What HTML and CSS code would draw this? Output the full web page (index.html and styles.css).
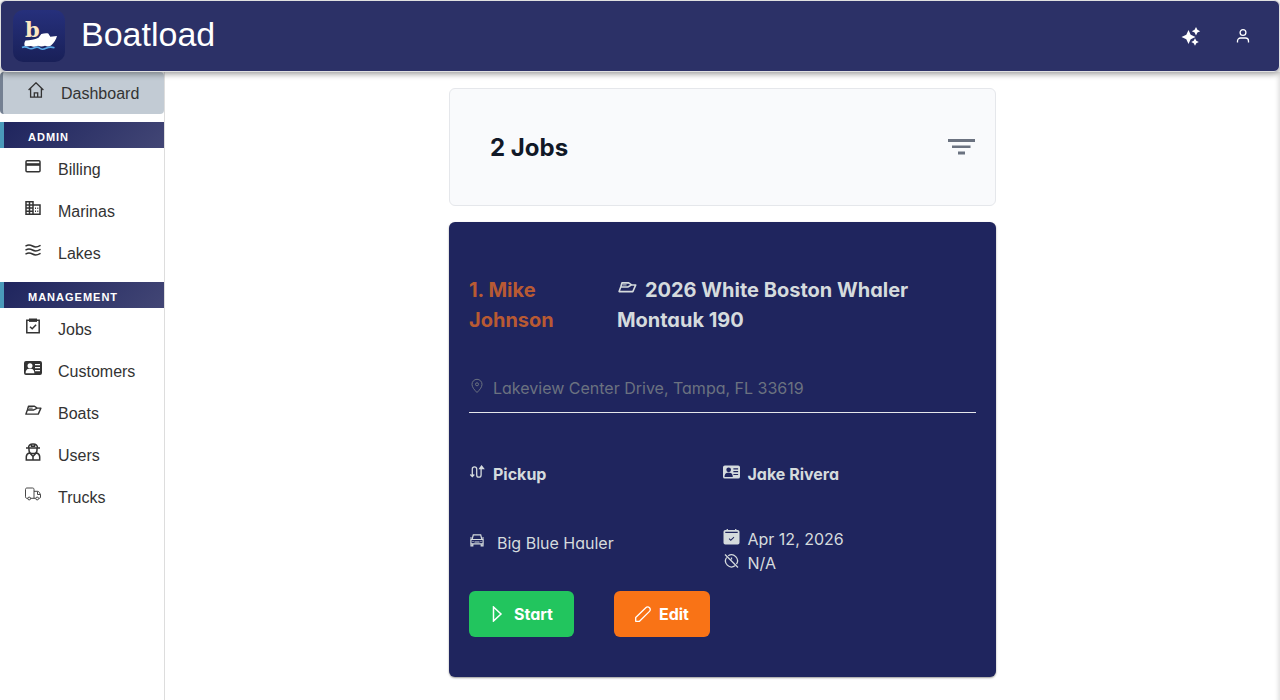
FILE: index.html
```
<!DOCTYPE html>
<html lang="en">
<head>
  <meta charset="utf-8">
  <title>Boatload</title>
  <link rel="stylesheet" href="styles.css">
</head>
<body>

<svg class="defs" aria-hidden="true">
  <symbol id="boat" viewBox="0 0 24 24">
    <path d="M2.500 17.500L4.500 12H13L17.500 9.500H22.500L19 17.500zM4.500 12L6 7h8l3.500 2.500" fill="none" stroke="currentColor" stroke-width="1.900" stroke-linejoin="round"/>
    <path d="M6.500 9.500h5" stroke="currentColor" stroke-width="1.200"/>
  </symbol>
  <symbol id="idcard" viewBox="0 0 18 14">
    <path fill="currentColor" fill-rule="evenodd" d="M2 0h14a2 2 0 0 1 2 2v10a2 2 0 0 1-2 2H2a2 2 0 0 1-2-2V2a2 2 0 0 1 2-2zM6 2.200a2.500 2.500 0 1 0 0 5 2.500 2.500 0 0 0 0-5zM1.600 12.200h8.800c0-2.800-1.400-4.400-3.400-4.400H5c-2 0-3.400 1.600-3.400 4.400zM11 3v1.300h5V3zm0 3v1.300h5V6zm0 3v1.300h5V9z"/>
  </symbol>
</svg>

<header class="topbar">
  <a class="brand" href="#">
    <svg class="logo" viewBox="0 0 52 52" aria-hidden="true">
      <defs>
        <linearGradient id="logoBg" x1="0" y1="0" x2="0" y2="1">
          <stop offset="0" stop-color="#26307c"/>
          <stop offset="1" stop-color="#192058"/>
        </linearGradient>
      </defs>
      <rect width="52" height="52" rx="10" fill="url(#logoBg)"/>
      <text class="logo-letter" x="12" y="27">b</text>
      <path d="M12.500 30.500c4.500-.3 9-1 13-2.800l2.800-3.600c2.500-.8 5-.9 7-.6l2 3.200 6.700-.7c-1 3.600-3.200 7-6 9.600-2 1.200-4 1-6 .2-2.500 1-4.500 1-7 0-2.500 1-5 1.200-7 .2l-6 .5c-1-2-.8-4 .5-6z" fill="#fff"/>
      <path d="M9 37.500c2.500-1.300 4.500-.6 6.500.6s4 .8 6-.3 4-.6 5.500.5 4 1 6 0 4.500-1.800 8.500-.5" fill="none" stroke="#5aa9e6" stroke-width="1.600"/>
    </svg>
    <span class="brand-name">Boatload</span>
  </a>
  <div class="actions">
    <button type="button" aria-label="Assistant">
      <svg width="20" height="20" viewBox="0 0 20 20" fill="currentColor"><path d="M7.500 4l2.200 4.800L14.500 11l-4.800 2.200-2.200 4.800-2.200-4.800L.5 11l4.800-2.200zM15 1l1.400 2.800L19.200 5.200l-2.800 1.400L15 9.400l-1.400-2.800-2.800-1.400 2.800-1.400zM14 12.200l1.300 2.500 2.500 1.300-2.500 1.300L14 19.800l-1.300-2.500-2.500-1.300 2.500-1.300z"/></svg>
    </button>
    <button type="button" aria-label="Account">
      <svg width="16" height="16" viewBox="0 0 16 16" fill="none" stroke="currentColor" stroke-width="1.300"><circle cx="8" cy="4.500" r="2.900"/><path d="M2.500 14.500v-1.500a3 3 0 0 1 3-3h5a3 3 0 0 1 3 3v1.500"/></svg>
    </button>
  </div>
</header>

<div class="layout">
  <nav class="sidebar">
    <a class="item active" href="#">
      <svg viewBox="0 0 16 16" fill="none" stroke="currentColor" stroke-width="1.300"><path d="M.6 8L8 .8 15.400 8M2.600 6.500v8.700h10.800V6.500M6.300 15v-4.200h3.400V15"/></svg>
      Dashboard
    </a>

    <h2>Admin</h2>
    <a class="item" href="#">
      <svg viewBox="0 0 16 16" fill="none" stroke="currentColor" stroke-width="1.500"><rect x="1" y="2.700" width="14" height="11" rx="1"/><path d="M1 6.500h14" stroke-width="2.600"/></svg>
      Billing
    </a>
    <a class="item" href="#">
      <svg viewBox="0 0 16 16" fill="none" stroke="currentColor" stroke-width="1.500"><path d="M1 1.700h7v12.600H1zM4.500 1.700v12.600M1 4.900h7M1 8.100h7M1 11.300h7M8 4.900h7v9.400H8"/><path d="M10 8.200h1M12.300 8.200h1M10 11.300h1M12.300 11.300h1" stroke-width="1.600"/></svg>
      Marinas
    </a>
    <a class="item" href="#">
      <svg viewBox="0 0 16 16" fill="none" stroke="currentColor" stroke-width="1.500" stroke-linecap="round"><path d="M1 3.800c2-1.300 4-1.300 6.500.2s4.500 1.300 7.500-.4M1 7.800c2-1.300 4-1.300 6.500.2s4.500 1.300 7.500-.4M1 11.800c2-1.300 4-1.300 6.500.2s4.500 1.300 7.500-.4"/></svg>
      Lakes
    </a>

    <h2>Management</h2>
    <a class="item" href="#">
      <svg viewBox="0 0 16 16" fill="none" stroke="currentColor" stroke-width="1.500"><path d="M1.800 2.200h12.400v12.500H1.800z"/><path d="M4 2.200h8" stroke-width="3.400"/><path d="M5 8.700l2.200 2.100 3.900-4"/></svg>
      Jobs
    </a>
    <a class="item" href="#">
      <svg class="wide"><use href="#idcard"/></svg>
      Customers
    </a>
    <a class="item" href="#">
      <svg class="hull"><use href="#boat"/></svg>
      Boats
    </a>
    <a class="item" href="#">
      <svg class="tall" viewBox="0 0 16 18" fill="none" stroke="currentColor" stroke-width="1.500"><path d="M1 5h14M3.500 5c0-2.500 2-4 4.500-4s4.500 1.500 4.500 4M6.500 1.300v2h3v-2M4 5v2c0 2.200 1.800 3.600 4 3.600s4-1.400 4-3.600V5M4.800 9.800c-2.500.8-3.500 2-3.500 4V17h13.400v-3.200c0-2-1-3.200-3.500-4M4.800 10L8 13.500 11.200 10M8 13.500V17"/></svg>
      Users
    </a>
    <a class="item" href="#">
      <svg viewBox="0 0 16 16" fill="none" stroke="currentColor" stroke-width=".9"><path d="M2.800 12.300H2C1 12.300.5 11.800.5 10.800V3.500c0-1 .5-1.500 1.500-1.500h5.500C8.500 2 9 2.500 9 3.500v8.800H5.500M9 5.300h3.500c1 0 1.500.4 2 1.400l1 2v2.300c0 .9-.4 1.300-1.500 1.300M9 12.300h1.700M12.500 5.500v3h2.800"/><circle cx="4.200" cy="12.500" r="1.400"/><circle cx="12.200" cy="12.500" r="1.400"/></svg>
      Trucks
    </a>
  </nav>

  <main>
    <section class="summary">
      <h1>2 Jobs</h1>
      <button type="button" class="filter" aria-label="Filter jobs">
        <svg width="28" height="18" viewBox="0 0 28 18" fill="currentColor"><path d="M1 1h27v3H1zM5 7.500h18.500v2.500H5zM11 13.500h7v3h-7z"/></svg>
      </button>
    </section>

    <article class="job">
      <div class="job-title">
        <h3 class="customer">1. Mike Johnson</h3>
        <h3><svg class="boat"><use href="#boat"/></svg>2026 White Boston Whaler Montauk 190</h3>
      </div>

      <p class="address">
        <svg viewBox="0 0 16 16" fill="none" stroke="currentColor"><path d="M8 14.500C5 11.500 3 9 3 6.300a5 5 0 0 1 10 0C13 9 11 11.500 8 14.500z"/><circle cx="8" cy="6.300" r="1.500"/></svg>
        Lakeview Center Drive, Tampa, FL 33619
      </p>

      <div class="details">
        <p class="strong">
          <svg viewBox="0 0 16 16" fill="none" stroke="currentColor" stroke-width="1.300"><path d="M3.300 12.500V5a2.200 2.200 0 0 1 4.400 0v6a2.200 2.200 0 0 0 4.400 0V4M1.300 10.500l2 2 2-2"/><path d="M10.800 4.500l1.800-2.500 1.900 2.500z" fill="currentColor"/></svg>
          Pickup
        </p>
        <p class="strong">
          <svg class="card-icon"><use href="#idcard"/></svg>
          Jake Rivera
        </p>
        <p class="truck">
          <svg viewBox="0 0 16 16" fill="none" stroke="currentColor" stroke-width="1.200"><path d="M1.900 6.500h12.200v4.300H1.900zM3.100 6.500l1.200-4.600h7.400l1.200 4.600M2 10.800v2h1.800v-2M12.200 10.800v2H14v-2M5.500 9h5M3.500 8.500h1M11.500 8.500h1M1 5h2M13 5h2"/></svg>
          Big Blue Hauler
        </p>
        <div class="when">
          <p>
            <svg class="card-icon" viewBox="0 0 18 18"><path fill="currentColor" fill-rule="evenodd" d="M3.500 0H5v1h8V0h1.500v1H16a2 2 0 0 1 2 2v12.500a2 2 0 0 1-2 2H2a2 2 0 0 1-2-2V3a2 2 0 0 1 2-2h1.500zM2 3v1.600h14V3zM11.500 8.700l-3.300 3.200-1.600-1.500-.7.800 2.300 2.200 4-3.900z"/></svg>
            Apr 12, 2026
          </p>
          <p>
            <svg class="card-icon" viewBox="0 0 17 16" fill="none" stroke="currentColor" stroke-width="1.300"><path d="M2 1.500l13 13M5.200 2.800a6 6 0 0 1 8.300 8.300M12 12.800A6 6 0 0 1 3.600 4.500M8.500 4.500v2"/></svg>
            N/A
          </p>
        </div>
      </div>

      <div class="buttons">
        <button type="button" class="start">
          <svg viewBox="0 0 16 16" fill="none" stroke="currentColor" stroke-width="1.500"><path d="M3.500 1l7.500 7-7.500 7z"/></svg>
          Start
        </button>
        <button type="button" class="edit">
          <svg viewBox="0 0 16 16" fill="none" stroke="currentColor" stroke-width="1.300" stroke-linejoin="round"><path d="M.7 15.300V11.500L10.800 1.700a2.600 2.600 0 0 1 3.700 0 2.600 2.600 0 0 1 0 3.700L4.500 15.300z"/></svg>
          Edit
        </button>
      </div>
    </article>
  </main>
</div>

</body>
</html>
```
FILE: styles.css
```
* {
  box-sizing: border-box;
}

body {
  margin: 0;
  min-height: 100vh;
  display: flex;
  flex-direction: column;
  font-family: "Liberation Sans", Arial, sans-serif;
  font-size: 16px;
  background: #fff;
  color: #333;
}

h1, h2, h3, p {
  margin: 0;
}

button {
  font: inherit;
  border: none;
  cursor: pointer;
}

.defs {
  display: none;
}

/* top bar */
.topbar {
  display: flex;
  justify-content: space-between;
  align-items: center;
  height: 72px;
  padding: 0 16px 0 12px;
  background: #2c3167;
  border: 1px solid #e0e0e0;
  border-radius: 6px;
  box-shadow: 0 2px 6px rgba(0, 0, 0, 0.4);
  position: relative;
  z-index: 1;
}

.brand {
  display: flex;
  align-items: center;
  gap: 16px;
  color: #fff;
  text-decoration: none;
}

.logo {
  width: 52px;
  height: 52px;
}

.logo-letter {
  font: bold 21px "DejaVu Serif", serif;
  fill: #fbe7c3;
}

.brand-name {
  font-size: 34px;
  line-height: 40px;
  padding-bottom: 4px;
}

.actions {
  display: flex;
  gap: 12px;
}

.actions button {
  display: flex;
  align-items: center;
  justify-content: center;
  width: 40px;
  height: 40px;
  padding: 0;
  background: none;
  color: #fff;
}

.layout {
  flex: 1;
  display: flex;
}

/* sidebar */
.sidebar {
  width: 165px;
  flex-shrink: 0;
  border-right: 1px solid #ddd;
}

.sidebar h2 {
  margin-top: 8px;
  padding: 4px 0 0 24px;
  border-left: 4px solid #4a9aba;
  background: linear-gradient(135deg, #1f255e, #424675);
  color: #fff;
  font-size: 11px;
  line-height: 22px;
  letter-spacing: 1px;
  text-transform: uppercase;
}

.item {
  display: flex;
  align-items: center;
  height: 42px;
  padding: 2px 0 0 25px;
  color: #333;
  text-decoration: none;
}

.item svg {
  width: 16px;
  height: 16px;
  margin: 0 17px 8px 0;
}

.item svg.wide {
  width: 18px;
  height: 14px;
  margin: 0 16px 8px -1px;
}

.item svg.hull {
  width: 18px;
  height: 18px;
  margin: 0 16px 8px -1px;
}

.item svg.tall {
  height: 18px;
}

.item.active {
  border-left: 3px solid #748092;
  border-radius: 4px;
  background: #c2cbd4;
}

/* jobs */
main {
  flex: 1;
  padding: 16px;
  font-family: Inter, sans-serif;
  font-feature-settings: "cv11";
  box-shadow: inset -4px 0 4px -2px rgba(0, 0, 0, 0.12);
}

.summary, .job {
  max-width: 547px;
  margin: 0 auto 16px;
  border-radius: 6px;
}

.summary {
  display: flex;
  justify-content: space-between;
  align-items: center;
  height: 118px;
  padding: 0 20px 0 40px;
  border: 1px solid #e5e7eb;
  background: #f9fafc;
}

.summary h1 {
  padding-top: 2px;
  font-size: 24px;
  font-weight: 700;
  line-height: 32px;
  color: #111827;
}

.filter {
  display: flex;
  padding: 0;
  background: none;
  color: #6b7280;
}

.job {
  padding: 53px 20px 40px;
  background: #1f255e;
  color: #d5dbdd;
  box-shadow: 0 1px 2px rgba(0, 0, 0, 0.4);
}

.job-title {
  display: grid;
  grid-template-columns: 7fr 17fr;
}

.job-title h3 {
  font-size: 20px;
  font-weight: 700;
  line-height: 30px;
}

.job-title .customer {
  color: #b85a33;
  padding-right: 40px;
}

.boat {
  width: 20px;
  height: 20px;
  margin-right: 8px;
}

.address, .details p {
  display: flex;
  align-items: center;
  gap: 8px;
  line-height: 24px;
}

.job svg {
  flex-shrink: 0;
}

.address svg, .details svg {
  width: 16px;
  height: 16px;
  margin-bottom: 5px;
}

.address {
  margin-top: 41px;
  padding-bottom: 12px;
  border-bottom: 1px solid #e5e7eb;
  color: #6b7280;
}

.details {
  display: grid;
  grid-template-columns: 1fr 1fr;
  row-gap: 41px;
  align-items: start;
  margin-top: 49px;
}

.details .strong {
  font-weight: 700;
}

.details .card-icon {
  width: 17px;
}

.details .truck {
  gap: 12px;
  padding-top: 4px;
}

.buttons {
  display: flex;
  gap: 40px;
  margin-top: 16px;
}

.buttons button {
  display: flex;
  align-items: center;
  gap: 8px;
  height: 46px;
  padding: 0 21px;
  border-radius: 6px;
  color: #fff;
  font-weight: 700;
  font-feature-settings: "cv11";
}

.buttons svg {
  width: 16px;
  height: 16px;
}

.start {
  background: #22c55e;
}

.edit {
  background: #f97316;
}
```
